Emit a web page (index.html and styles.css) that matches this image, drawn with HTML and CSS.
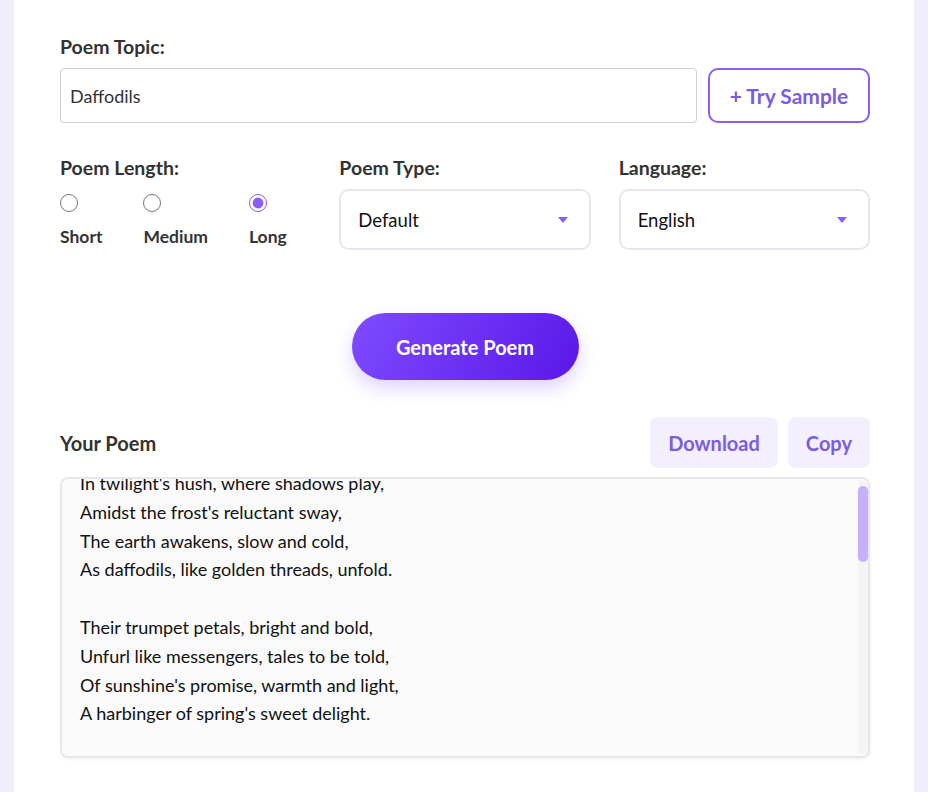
FILE: index.html
```html
<!DOCTYPE html>
<html lang="en">
<head>
  <meta charset="UTF-8">
  <meta name="viewport" content="width=device-width, initial-scale=1.0">
  <title>Poem Generator</title>
  <link rel="stylesheet" href="styles.css">
</head>
<body>
  <div class="card">
    <label class="field-label" for="topic">Poem Topic:</label>
    <div class="topic-row">
      <input type="text" id="topic" class="topic-input" value="Daffodils">
      <button class="sample-btn">+ Try Sample</button>
    </div>

    <div class="options">
      <div class="option">
        <span class="field-label">Poem Length:</span>
        <div class="radios">
          <label class="radio"><input type="radio" name="length" value="short"><span>Short</span></label>
          <label class="radio"><input type="radio" name="length" value="medium"><span>Medium</span></label>
          <label class="radio"><input type="radio" name="length" value="long" checked><span>Long</span></label>
        </div>
      </div>
      <div class="option">
        <label class="field-label" for="type">Poem Type:</label>
        <select id="type" class="select">
          <option>Default</option>
          <option>Sonnet</option>
          <option>Haiku</option>
          <option>Free Verse</option>
        </select>
      </div>
      <div class="option">
        <label class="field-label" for="lang">Language:</label>
        <select id="lang" class="select">
          <option>English</option>
          <option>Spanish</option>
          <option>French</option>
        </select>
      </div>
    </div>

    <div class="generate-wrap">
      <button class="generate-btn">Generate Poem</button>
    </div>

    <div class="poem-head">
      <h2 class="poem-title">Your Poem</h2>
      <div class="poem-actions">
        <button class="soft-btn">Download</button>
        <button class="soft-btn">Copy</button>
      </div>
    </div>
    <div class="poem-box">
      <textarea class="poem" id="poem" readonly>In twilight's hush, where shadows play,
Amidst the frost's reluctant sway,
The earth awakens, slow and cold,
As daffodils, like golden threads, unfold.

Their trumpet petals, bright and bold,
Unfurl like messengers, tales to be told,
Of sunshine's promise, warmth and light,
A harbinger of spring's sweet delight.

Along the banks where waters run,
They lift their faces to the sun,
A dancing host, a gilded sea,
That sways in breezes, wild and free.

The poet wandered, lonely, slow,
And found them in the vale below,
Ten thousand glancing, side by side,
In sprightly joy, in golden pride.

When winter's grip begins to fade,
They rise again in glen and glade,
Each bloom a lantern, soft and warm,
That weathered every passing storm.

And when in pensive mood we lie,
Their memory flashes on the eye,
The heart with pleasure fills anew,
And dances with the daffodils too.

So let them bloom, year after year,
A golden whisper, bright and clear,
Of hope reborn from frozen ground,
Where spring's first music can be found.</textarea>
      <span class="scroll-track"></span>
      <span class="scroll-thumb"></span>
    </div>
  </div>
  <script>
    document.getElementById('poem').scrollTop = 26;
  </script>
</body>
</html>
```

FILE: styles.css
```css
body {
  margin: 0;
  background: #f1edfd;
  font-family: Lato, "Open Sans", sans-serif;
  color: #333;
}
.card {
  width: 900px;
  min-height: 792px;
  box-sizing: border-box;
  margin-left: 14px;
  background: #fff;
  padding: 35px 44px 0 46px;
}
.field-label {
  display: block;
  font-size: 19.5px;
  font-weight: 700;
  color: #333;
  margin-bottom: 10px;
}
.topic-row {
  display: flex;
  gap: 11px;
}
.topic-input {
  flex: 1;
  height: 55px;
  box-sizing: border-box;
  border: 1px solid #cfcfd4;
  border-radius: 4px;
  padding: 0 9px;
  font-family: inherit;
  font-size: 18px;
  color: #333;
}
.sample-btn {
  width: 162px;
  height: 55px;
  background: #fff;
  border: 2px solid #8b5cf6;
  border-radius: 10px;
  color: #7c5ce0;
  font-family: inherit;
  font-size: 21px;
  font-weight: 700;
  cursor: pointer;
}
.options {
  display: grid;
  grid-template-columns: 1fr 1fr 1fr;
  gap: 28px;
  margin-top: 33px;
}
.radios {
  display: flex;
  gap: 41px;
  margin-top: 15px;
}
.radio {
  display: flex;
  flex-direction: column;
  gap: 14px;
  font-size: 17.5px;
  font-weight: 700;
  color: #333;
  cursor: pointer;
}
.radio input {
  width: 18px;
  height: 18px;
  margin: 0;
  accent-color: #8b5cf6;
}
.select {
  width: 100%;
  height: 61px;
  appearance: none;
  -webkit-appearance: none;
  background: #fff url("data:image/svg+xml;utf8,<svg xmlns='http://www.w3.org/2000/svg' width='10' height='6'><path d='M0 0h10L5 6z' fill='%238b5cf6'/></svg>") no-repeat right 21px center;
  border: 2px solid #e6e6ec;
  border-radius: 10px;
  padding: 0 17px;
  font-family: inherit;
  font-size: 18.5px;
  color: #111;
}
.generate-wrap {
  display: flex;
  justify-content: center;
  margin-top: 63px;
}
.generate-btn {
  width: 227px;
  height: 67px;
  border: none;
  border-radius: 34px;
  background: linear-gradient(120deg, #7f4bff, #5a17e8);
  color: #fff;
  font-family: inherit;
  font-size: 20px;
  font-weight: 700;
  box-shadow: 0 8px 18px rgba(124, 77, 255, 0.25);
  cursor: pointer;
}
.poem-head {
  display: flex;
  justify-content: space-between;
  align-items: center;
  margin-top: 37px;
}
.poem-title {
  margin: 0;
  font-size: 20px;
  font-weight: 700;
  color: #333;
}
.poem-actions {
  display: flex;
  gap: 10px;
}
.soft-btn {
  height: 51px;
  padding: 0 18px;
  border: none;
  border-radius: 8px;
  background: #f3efff;
  color: #7c5ce0;
  font-family: inherit;
  font-size: 20px;
  font-weight: 700;
  cursor: pointer;
}
.poem-box {
  position: relative;
  margin-top: 9px;
}
.poem {
  display: block;
  width: 100%;
  height: 281px;
  box-sizing: border-box;
  padding: 16px 18px;
  background: #fafafa;
  border: 2px solid #e6e6ec;
  border-radius: 8px;
  font-family: inherit;
  font-size: 18px;
  line-height: 1.6;
  color: #111;
  resize: none;
  outline: none;
  scrollbar-width: none;
  box-shadow: 1px 2px 3px rgba(0, 0, 0, 0.04);
}
.poem::-webkit-scrollbar {
  display: none;
}
.scroll-track {
  position: absolute;
  top: 4px;
  bottom: 4px;
  right: 2px;
  width: 10px;
  background: #f4f4f6;
  border-radius: 5px;
}
.scroll-thumb {
  position: absolute;
  top: 9px;
  right: 2px;
  width: 10px;
  height: 76px;
  background: #c4b0fc;
  border-radius: 5px;
}
```
